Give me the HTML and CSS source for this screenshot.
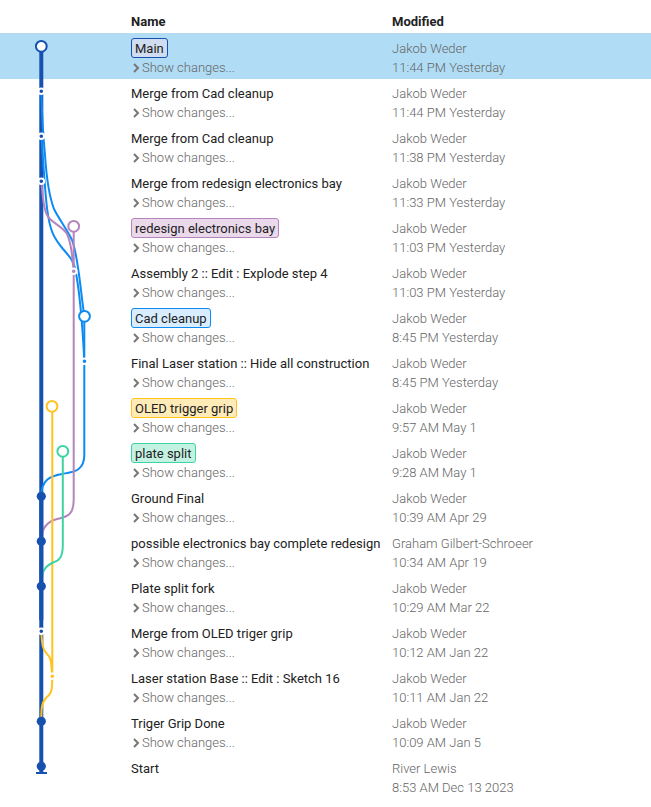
FILE: index.html
```html
<!DOCTYPE html>
<html lang="en">
<head>
<meta charset="utf-8">
<meta name="viewport" content="width=device-width, initial-scale=1">
<title>Version history</title>
<link rel="stylesheet" href="styles.css">
</head>
<body>
<main class="history">
<table class="versions">
<thead><tr><th class="graph-col"></th><th class="name-col" scope="col">Name</th><th scope="col">Modified</th></tr></thead>
<tbody id="rows"></tbody>
</table>
<svg class="graph" width="100" height="799" viewBox="0 0 100 799" fill="none" aria-hidden="true">
<path class="trunk" d="M41.3 46V773"/>
<path class="trunk-base" d="M36 773H47"/>
<g class="blue">
<path d="M41.3 91C42 115 43.5 140 45 155C46.5 178 49 196 54 209C60 221 67 229 72 240C78 255 79.5 282 84.3 316"/>
<path d="M41.3 136C43 155 44.5 187 47 208C50 232 54 238 63 249C69 256 73 260 75 268C79 287 82 315 84.3 361"/>
<path d="M84.3 316V455C84.3 472 72 472 62 474C50 476 41.3 480 41.3 496"/>
</g>
<g class="purple">
<path d="M41.3 181C43 200 44 214 50 219C56 225 63 227 67 234C72 244 72 256 73.7 271"/>
<path d="M73.7 226V500C73.7 517 65 517 57 519C49 521 41.3 526 41.3 541"/>
</g>
<g class="yellow">
<path d="M52.3 406V676M41.3 631C42 646 43 650 47 654C52 658 51 665 52.3 676C52.3 691 51.5 694 46 698C41.3 703 41.3 710 41.3 721"/>
</g>
<path class="green" d="M62.8 451V545C62.8 559 58 561 52 563C46 566 41.3 570 41.3 586"/>
<path class="trunk" d="M41.3 496V620"/>
<g class="merge">
<circle cx="41.3" cy="91.3" r="2.8"/><circle cx="41.3" cy="136.3" r="2.8"/><circle cx="41.3" cy="181.3" r="2.8"/><circle cx="41.3" cy="631.3" r="2.8"/>
<circle class="blue-fill" cx="84.5" cy="361.3" r="2.8"/><circle class="purple-fill" cx="73.7" cy="271.3" r="2.8"/><circle class="yellow-fill" cx="52.3" cy="676.3" r="2.8"/>
</g>
<g class="commit"><circle cx="41.3" cy="496.3" r="4.6"/><circle cx="41.3" cy="541.3" r="4.6"/><circle cx="41.3" cy="586.3" r="4.6"/><circle cx="41.3" cy="721.3" r="4.6"/><circle cx="41.3" cy="766.3" r="4.6"/></g>
<g class="head"><circle class="navy" cx="41.3" cy="46.3" r="5.4"/><circle class="purple" cx="73.7" cy="226.3" r="5.4"/><circle class="blue" cx="84.5" cy="316.3" r="5.4"/><circle class="yellow" cx="52" cy="406.3" r="5.4"/><circle class="green" cx="62.8" cy="451.3" r="5.4"/></g>
</svg>
</main>
<script src="script.js"></script>
</body>
</html>
```
FILE: styles.css
```css
* { box-sizing: border-box; }
body {
  margin: 0;
  background: #fff;
  color: #222;
  font: 13px/20px Roboto, "Liberation Sans", sans-serif;
}
.history { position: relative; }
.versions {
  width: 100%;
  border-collapse: separate;
  border-spacing: 0;
  table-layout: fixed;
}
.graph-col { width: 131px; }
.name-col { width: 261px; }
th {
  height: 34px;
  padding: 12px 0 1px;
  border-bottom: 1px solid #b5dbed;
  text-align: left;
  font-weight: 700;
}
td {
  height: 45px;
  padding: 4px 0 2px;
  vertical-align: top;
  white-space: nowrap;
}
.selected td { background: #b0ddf5; }
.title, .author { height: 20px; line-height: 22px; }
.branch {
  display: inline-block;
  height: 20px;
  padding: 0 3px;
  border: 1px solid;
  border-radius: 3px;
  line-height: 20px;
  vertical-align: top;
}
.branch-main { background: #d0dcef; border-color: #1651b0; }
.branch-purple { background: #ead9eb; border-color: #b583bd; }
.branch-blue { background: #d8edff; border-color: #0d8bf2; }
.branch-yellow { background: #ffebb8; border-color: #ffc21f; }
.branch-green { background: #c4f2e2; border-color: #3fd3a4; }
.changes {
  display: flex;
  align-items: center;
  gap: 2px;
  padding: 0 0 0 1px;
  border: 0;
  background: none;
  color: #666;
  font: inherit;
  font-weight: 300;
  line-height: 19px;
  cursor: pointer;
}
.chevron { width: 8px; height: 10px; fill: none; stroke: #777; stroke-width: 2; }
.modified { color: #666; font-weight: 300; }
.date { line-height: 19px; }

.graph { position: absolute; top: 0; left: 0; pointer-events: none; }
.trunk { stroke: #1651b0; stroke-width: 4; }
.trunk-base { stroke: #1651b0; stroke-width: 2; }
.graph .blue { stroke: #0d8bf2; stroke-width: 2; }
.graph .purple { stroke: #b583bd; stroke-width: 2; }
.graph .yellow { stroke: #ffc21f; stroke-width: 2; }
.graph .green { stroke: #3fd3a4; stroke-width: 2; }
.graph .navy { stroke: #1651b0; stroke-width: 2; }
.head { fill: #fff; }
.merge { fill: #1651b0; stroke: #fff; stroke-width: 2; }
.merge .blue-fill { fill: #0d8bf2; }
.merge .purple-fill { fill: #b583bd; }
.merge .yellow-fill { fill: #ffc21f; }
.commit { fill: #1651b0; }
```
FILE: script.js
```js
// [name, author, date, branch colour]
const versions = [
  ["Main", "Jakob Weder", "11:44 PM Yesterday", "main"],
  ["Merge from Cad cleanup", "Jakob Weder", "11:44 PM Yesterday"],
  ["Merge from Cad cleanup", "Jakob Weder", "11:38 PM Yesterday"],
  ["Merge from redesign electronics bay", "Jakob Weder", "11:33 PM Yesterday"],
  ["redesign electronics bay", "Jakob Weder", "11:03 PM Yesterday", "purple"],
  ["Assembly 2 :: Edit : Explode step 4", "Jakob Weder", "11:03 PM Yesterday"],
  ["Cad cleanup", "Jakob Weder", "8:45 PM Yesterday", "blue"],
  ["Final Laser station :: Hide all construction", "Jakob Weder", "8:45 PM Yesterday"],
  ["OLED trigger grip", "Jakob Weder", "9:57 AM May 1", "yellow"],
  ["plate split", "Jakob Weder", "9:28 AM May 1", "green"],
  ["Ground Final", "Jakob Weder", "10:39 AM Apr 29"],
  ["possible electronics bay complete redesign", "Graham Gilbert-Schroeer", "10:34 AM Apr 19"],
  ["Plate split fork", "Jakob Weder", "10:29 AM Mar 22"],
  ["Merge from OLED triger grip", "Jakob Weder", "10:12 AM Jan 22"],
  ["Laser station Base :: Edit : Sketch 16", "Jakob Weder", "10:11 AM Jan 22"],
  ["Triger Grip Done", "Jakob Weder", "10:09 AM Jan 5"],
  ["Start", "River Lewis", "8:53 AM Dec 13 2023"]
];
const changes = '<button class="changes" type="button"><svg class="chevron" viewBox="0 0 8 10"><path d="M2 1l4 4-4 4"/></svg>Show changes...</button>';
document.getElementById("rows").innerHTML = versions.map(([name, author, date, branch], i) => `
  <tr class="${i === 0 ? "selected" : ""}">
    <td></td>
    <td><div class="title">${branch ? `<span class="branch branch-${branch}">${name}</span>` : name}</div>${i < versions.length - 1 ? changes : ""}</td>
    <td class="modified"><div class="author">${author}</div><div class="date">${date}</div></td>
  </tr>`).join("");
```
